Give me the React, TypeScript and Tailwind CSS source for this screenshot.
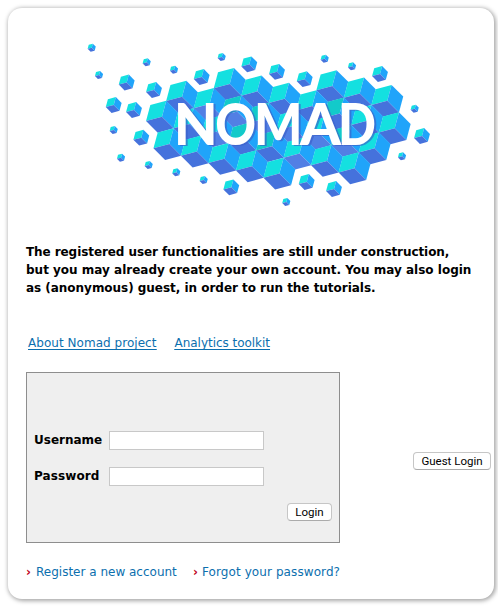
import React from "react";

const R = 16.5;
// Unit edges of the tilted isometric cube.
const A = [0.2588, -0.9659];
const B = [-0.9659, 0.2588];
const C = [0.7071, 0.7071];

function Cube({
  x,
  y,
  r,
  top = "#14e0e0",
  base = "#4572dc",
}: {
  x: number;
  y: number;
  r: number;
  top?: string;
  base?: string;
}) {
  const p = (v: number[], s = 1) =>
    `${(x + v[0] * r * s).toFixed(2)},${(y + v[1] * r * s).toFixed(2)}`;
  const c = `${x},${y}`;
  return (
    <g>
      <polygon fill={top} points={`${c} ${p(A)} ${p(C, -1)} ${p(B)}`} />
      <polygon fill="#20a4fa" points={`${c} ${p(A)} ${p(B, -1)} ${p(C)}`} />
      <polygon fill={base} points={`${c} ${p(B)} ${p(A, -1)} ${p(C)}`} />
    </g>
  );
}

// [row, first column, last column]
const rows = [
  [-1, 4, 6],
  [0, 0, 6],
  [1, -2, 5],
  [2, -3, 4],
  [3, -3, 1],
];

const medium = [
  [126.7, 82.5], [154, 90], [113.7, 105], [134, 110], [201.7, 77], [249.3, 64.3],
  [277, 71.8], [304.7, 79.2], [380, 74], [422, 136], [306.7, 182], [334, 189],
  [231.3, 187.3], [141.3, 137.7],
];

const small = [
  [91.7, 47.7], [99, 75], [146.7, 62.3], [174, 69.7], [113.7, 130], [121, 157.7],
  [148.7, 165], [176.3, 172.3], [203.7, 180], [286.3, 202], [221.7, 57],
  [324.7, 58.7], [352, 66.3], [414.7, 108.7], [402, 156.3],
];

const shadedTops = ["4,0", "0,1", "1,1", "4,1", "0,2", "1,2"];
const shadedBases = ["-1,1", "0,1", "1,1", "2,1", "3,1", "4,1", "-1,2", "2,2"];

const letters: [string, number, number][] = [
  ["N", 173.8, 44],
  ["O", 215.3, 40.8],
  ["M", 254, 48.5],
  ["A", 300, 41],
  ["D", 338, 38],
];

function Logo() {
  return (
    <svg className="block" width="486" height="212" viewBox="8 8 486 212" role="img" aria-label="NOMAD">
      {rows.flatMap(([j, from, to]) =>
        Array.from({ length: to - from + 1 }, (_, k) => {
          const i = from + k;
          const key = `${i},${j}`;
          return (
            <Cube
              key={key}
              x={229.7 + i * 27.5 + j * 7.4}
              y={84 + i * 7.37 + j * 27.4}
              r={R}
              top={shadedTops.includes(key) ? "#12caca" : undefined}
              base={shadedBases.includes(key) ? "#527fe4" : undefined}
            />
          );
        }),
      )}
      {medium.map(([x, y]) => (
        <Cube key={`${x}-${y}`} x={x} y={y} r={8.2} />
      ))}
      {small.map(([x, y]) => (
        <Cube key={`${x}-${y}`} x={x} y={y} r={4.2} />
      ))}
      <g
        className="drop-shadow-[2px_1.5px_0.5px_rgba(58,96,200,0.65)]"
        fill="#ffffff"
        fontFamily="Lato, sans-serif"
        fontWeight={900}
        fontSize={57}
      >
        {letters.map(([ch, x, w]) => (
          <text key={ch} x={x} y={145} textLength={w} lengthAdjust="spacingAndGlyphs">
            {ch}
          </text>
        ))}
      </g>
    </svg>
  );
}

const buttonClass =
  "h-[18px] rounded-[4px] border border-[#c6c6c6] border-b-[#ababab] bg-white text-[11.5px] leading-[16px] text-black whitespace-nowrap font-[Roboto,sans-serif]";
const inputClass = "h-[19px] w-[155px] border border-[#c8c8c8] bg-white px-1 outline-none";

export default function App() {
  return (
    <div className="h-[606px] w-[498px] overflow-hidden bg-white pt-2 pl-2 font-['DejaVu_Sans',Verdana,sans-serif] text-[12px] text-black">
      <main className="h-[591px] w-[486px] rounded-[14px] bg-white shadow-[1px_1px_4px_1px_rgba(0,0,0,0.35)]">
        <Logo />
        <div className="pl-[18px] pt-[23px]">
          <p className="h-[54px] text-[12px] leading-[18px] font-bold whitespace-nowrap">
            <span className="block tracking-[-0.08px]">The registered user functionalities are still under construction,</span>
            <span className="block">but you may already create your own account. You may also login</span>
            <span className="block tracking-[-0.03px]">as (anonymous) guest, in order to run the tutorials.</span>
          </p>
          <nav className="mt-[37px] flex h-[18px] pl-[2px] leading-[18px] whitespace-nowrap text-[#0c6fae] underline underline-offset-2">
            <a href="#about" className="mr-[18px] tracking-[0.04px]">About Nomad project</a>
            <a href="#toolkit" className="tracking-[-0.03px]">Analytics toolkit</a>
          </nav>
          <div className="mt-[20px] flex">
            <form className="h-[171px] w-[314px] border border-[#8e8e8e] bg-[#efefef] pt-[58px] pl-[7px]">
              <label className="flex h-[19px] items-center font-bold">
                <span className="w-[75px] pb-px">Username</span>
                <input className={inputClass} />
              </label>
              <label className="mt-[17px] flex h-[19px] items-center font-bold">
                <span className="w-[75px] pb-px tracking-[0.1px]">Password</span>
                <input type="password" className={inputClass} />
              </label>
              <div className="mt-[17px] flex justify-end pr-[7px]">
                <button type="button" className={`${buttonClass} w-[45px]`}>Login</button>
              </div>
            </form>
            <button type="button" className={`${buttonClass} mt-[80px] ml-[73px] w-[78px]`}>Guest Login</button>
          </div>
          <div className="mt-[20px] flex h-[18px] leading-[18px] whitespace-nowrap text-[#0c6fae]">
            <span className="flex w-[167px]">
              <span className="w-[10px] text-[12px] font-bold text-[#c00020]">›</span>
              <a href="#register">Register a new account</a>
            </span>
            <span className="flex">
              <span className="w-[9px] text-[12px] font-bold text-[#c00020]">›</span>
              <a href="#forgot" className="tracking-[0.09px]">Forgot your password?</a>
            </span>
          </div>
        </div>
      </main>
    </div>
  );
}
